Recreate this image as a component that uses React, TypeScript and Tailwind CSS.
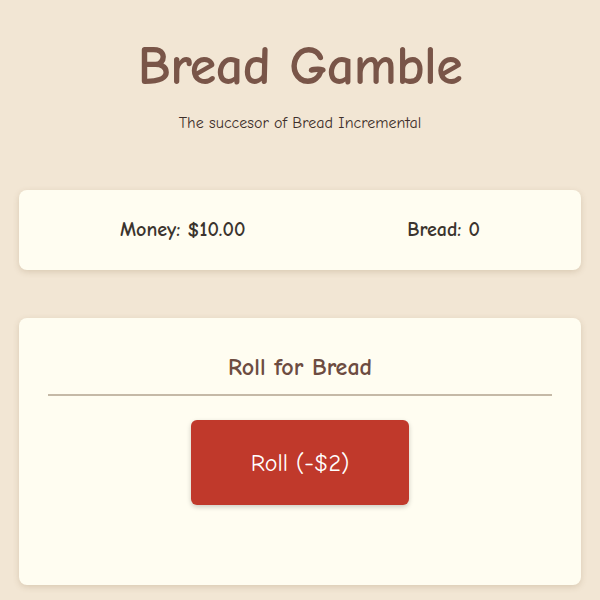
import { useState } from 'react';

const font = { fontFamily: '"Comic Neue", "Comic Sans MS", Lato, "Noto Sans", sans-serif' };

export default function App() {
  const [money, setMoney] = useState(10);
  const [bread, setBread] = useState(0);

  const roll = () => {
    if (money < 2) return;
    setMoney(money - 2);
    if (Math.random() < 0.5) setBread(bread + 1);
  };

  return (
    <div className="min-h-[600px] w-full bg-[#f2e6d4] px-[19px] pt-[28px] pb-[15px]" style={font}>
      <header className="text-center">
        <h1 className="text-[54px] font-black leading-[78px] tracking-[-0.5px] text-[#795548]">Bread Gamble</h1>
        <p className="mt-[6px] text-[16px] leading-[22px] text-[#3e2f2a]">The succesor of Bread Incremental</p>
      </header>

      <section className="mt-[56px] flex h-[80px] items-center justify-around rounded-lg bg-[#fffdf1] px-5 shadow-[0_2px_6px_rgba(120,90,50,0.2)]">
        <span className="text-[20px] font-bold text-[#3b342e]">Money: ${money.toFixed(2)}</span>
        <span className="text-[20px] font-bold text-[#3b342e]">Bread: {bread}</span>
      </section>

      <section className="mt-[48px] min-h-[267px] rounded-lg bg-[#fffdf1] px-[29px] pt-[30px] shadow-[0_2px_6px_rgba(120,90,50,0.2)]">
        <h2 className="border-b-2 border-[#c5b9a7] pb-2 text-center text-[24px] font-bold leading-[38px] text-[#6d4c41]">
          Roll for Bread
        </h2>
        <div className="flex justify-center pt-6">
          <button
            onClick={roll}
            className="h-[85px] w-[218px] cursor-pointer rounded-md bg-[#c0392b] text-[24px] text-white shadow-[0_2px_5px_rgba(0,0,0,0.2)]"
          >
            Roll (-$2)
          </button>
        </div>
      </section>
    </div>
  );
}
